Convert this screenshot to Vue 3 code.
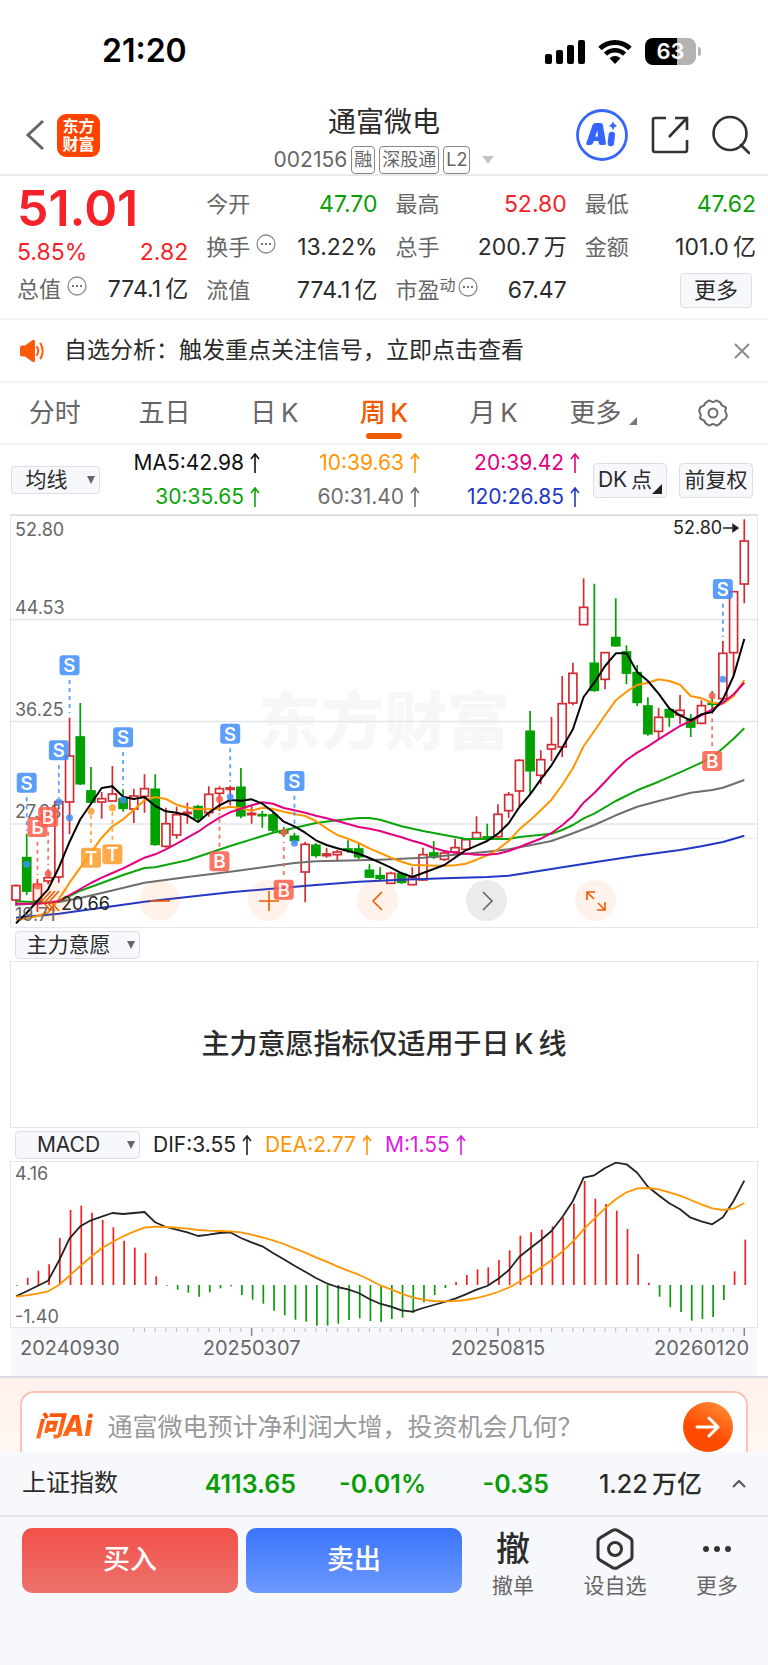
<script setup>
import { computed, ref } from 'vue'

const facts = [
  { label: '今开', value: '47.70', tone: 'down' },
  { label: '最高', value: '52.80', tone: 'up' },
  { label: '最低', value: '47.62', tone: 'down' },
  { label: '换手', value: '13.22%', hint: true },
  { label: '总手', value: '200.7\u2009万' },
  { label: '金额', value: '101.0\u2009亿' },
  { label: '流值', value: '774.1\u2009亿' },
  { label: '市盈', sup: '动', value: '67.47', hint: true }
]

const tabs = ['分时', '五日', '日\u2009K', '周\u2009K', '月\u2009K', '更多']
const activeTab = ref(tabs[3])

const averages = [
  { text: 'MA5:42.98', color: '#111111' },
  { text: '10:39.63', color: '#ff9500' },
  { text: '20:39.42', color: '#e3007f' },
  { text: '30:35.65', color: '#0aa50a' },
  { text: '60:31.40', color: '#6e6e6e' },
  { text: '120:26.85', color: '#2238c4' }
]

const macdValues = [
  { text: 'DIF:3.55', color: '#222222' },
  { text: 'DEA:2.77', color: '#ff9500' },
  { text: 'M:1.55', color: '#e01ae0' }
]

// weekly candles: high, body top, body bottom, low, 1 = rise / 0 = fall
const candles = [
  [1120, 1124, 1167, 1185, 1], [968, 1040, 1140, 1152, 0], [1103, 1120, 1170, 1203, 1],
  [1075, 1100, 1110, 1120, 1], [870, 872, 1098, 1115, 1], [620, 735, 873, 970, 1],
  [576, 678, 818, 822, 0], [768, 840, 873, 878, 0], [843, 863, 873, 923, 1],
  [765, 849, 870, 870, 1], [835, 863, 892, 902, 0], [833, 855, 894, 936, 1],
  [790, 833, 856, 905, 1], [790, 835, 1000, 1004, 0], [890, 938, 1006, 1010, 1],
  [887, 911, 972, 983, 1], [875, 904, 908, 938, 1], [881, 887, 921, 930, 0],
  [826, 850, 905, 917, 1], [826, 833, 847, 900, 1], [824, 831, 835, 883, 1],
  [771, 829, 914, 922, 0], [882, 907, 911, 938, 1], [900, 911, 914, 950, 0],
  [902, 912, 957, 963, 0], [948, 960, 966, 978, 0], [965, 976, 988, 996, 0],
  [992, 1000, 1083, 1174, 1], [996, 1003, 1033, 1040, 0], [1010, 1029, 1034, 1040, 1],
  [1017, 1023, 1031, 1047, 1], [988, 1014, 1018, 1025, 0], [997, 1014, 1037, 1044, 0],
  [1060, 1078, 1098, 1101, 0], [1069, 1094, 1102, 1107, 0], [1082, 1087, 1117, 1117, 1],
  [1082, 1089, 1114, 1119, 0], [1069, 1100, 1121, 1123, 1], [1010, 1031, 1107, 1110, 1],
  [990, 1026, 1038, 1044, 0], [1018, 1026, 1045, 1050, 1], [983, 1010, 1023, 1027, 1],
  [983, 986, 1015, 1020, 1], [916, 965, 982, 985, 1], [938, 978, 984, 986, 0],
  [880, 910, 977, 980, 1], [843, 851, 899, 921, 1], [745, 748, 840, 888, 1],
  [600, 661, 779, 850, 0], [718, 746, 793, 820, 1], [618, 701, 714, 750, 1],
  [495, 578, 708, 738, 1], [455, 487, 576, 583, 1], [202, 289, 341, 341, 1],
  [218, 457, 538, 542, 0], [424, 425, 505, 535, 1], [262, 380, 404, 407, 0],
  [403, 423, 486, 520, 0], [462, 485, 574, 585, 0], [559, 585, 668, 674, 0],
  [590, 619, 661, 685, 1], [590, 596, 618, 647, 0], [552, 598, 612, 640, 1],
  [609, 625, 648, 678, 0], [568, 584, 637, 640, 1], [540, 577, 580, 600, 0],
  [390, 427, 563, 568, 1], [242, 242, 425, 495, 1], [25, 90, 219, 277, 1]
]

const ma5 = [
  1237, 1206, 1170, 1135, 1070, 992, 925, 878, 831, 826, 857, 864, 858, 885, 901, 905, 913, 933,
  905, 883, 867, 869, 865, 878, 902, 932, 946, 965, 988, 1002, 1012, 1020, 1028, 1041, 1055, 1070,
  1087, 1098, 1086, 1074, 1062, 1040, 1018, 1004, 990, 968, 937, 888, 850, 805, 763, 710, 655, 558,
  515, 465, 427, 427, 483, 510, 548, 592, 613, 628, 610, 603, 565, 495, 384
]
const ma10 = [
  1226, 1222, 1216, 1204, 1165, 1115, 1070, 1025, 980, 946, 925, 897, 868, 858, 864, 881, 890, 895,
  895, 893, 887, 892, 899, 890, 894, 902, 909, 915, 930, 952, 972, 983, 996, 1012, 1026, 1040,
  1052, 1062, 1063, 1064, 1064, 1063, 1058, 1046, 1033, 1015, 990, 955, 928, 898, 866, 822, 772, 706,
  660, 613, 568, 542, 522, 515, 505, 510, 521, 555, 562, 575, 578, 556, 507
]
const ma20 = [
  1178, 1178, 1178, 1175, 1170, 1152, 1134, 1116, 1100, 1086, 1072, 1056, 1040, 1030, 1015, 998,
  980, 962, 940, 920, 904, 893, 883, 874, 878, 891, 898, 905, 914, 922, 930, 939, 948, 953, 960,
  970, 979, 989, 998, 1011, 1020, 1025, 1028, 1031, 1031, 1028, 1020, 1008, 995, 983, 966, 943, 915,
  875, 846, 812, 778, 747, 725, 706, 685, 665, 645, 630, 613, 595, 575, 550, 515
]
// slow averages: [week, level]
const ma30 = [
  [0, 1171], [3, 1175], [4, 1172], [6, 1139], [8, 1116], [10, 1092], [12, 1071], [13, 1069],
  [16, 1048], [20, 1005], [24, 965], [28, 936], [30, 928], [32, 921], [33, 921], [34, 926],
  [36, 946], [38, 960], [40, 972], [42, 984], [46, 984], [47, 978], [50, 968], [51, 957],
  [52, 942], [53, 922], [54, 908], [56, 870], [58, 838], [60, 812], [62, 784], [64, 755],
  [65, 738], [66, 712], [67, 683], [68, 652]
]
const ma60 = [
  [0, 1181], [4, 1173], [6, 1161], [8, 1146], [12, 1115], [16, 1098], [20, 1082], [26, 1056],
  [28, 1051], [34, 1046], [38, 1040], [42, 1028], [44, 1022], [46, 1015], [48, 1003], [50, 990],
  [52, 967], [54, 942], [56, 913], [58, 887], [60, 870], [63, 845], [65, 837], [66, 830], [68, 807]
]
const ma120 = [
  [0, 1220], [4, 1208], [8, 1190], [12, 1172], [16, 1158], [20, 1144], [28, 1122], [32, 1112],
  [36, 1106], [40, 1102], [44, 1098], [46, 1094], [50, 1074], [54, 1054], [58, 1034], [62, 1017],
  [64, 1006], [66, 993], [68, 974]
]

// trade signals: week, badge level, dot level, dashed line direction
const signals = [
  { kind: 'S', week: 1, y: 815, dot: 1060, dir: 1 },
  { kind: 'B', week: 2, y: 948, dot: 1125, dir: 1 },
  { kind: 'B', week: 3, y: 918, dot: 1088, dir: 1 },
  { kind: 'S', week: 4, y: 718, dot: 873, dir: 1 },
  { kind: 'S', week: 5, y: 463, dot: 920, dir: 1 },
  { kind: 'T', week: 7, y: 1040, dot: 901, dir: -1 },
  { kind: 'T', week: 9, y: 1030, dot: 890, dir: -1 },
  { kind: 'S', week: 10, y: 679, dot: 867, dir: 1 },
  { kind: 'B', week: 19, y: 1051, dot: 865, dir: -1 },
  { kind: 'S', week: 20, y: 668, dot: 858, dir: 1 },
  { kind: 'B', week: 25, y: 1136, dot: 964, dir: -1 },
  { kind: 'S', week: 26, y: 810, dot: 997, dir: 1 },
  { kind: 'B', week: 65, y: 750, dot: 554, dir: -1 },
  { kind: 'S', week: 66, y: 234, dot: 505, dir: 1 }
]
const signalColors = { S: '#3f8efc', B: '#ff5e4b', T: '#ff9c2a' }

const macdBars = [
  -2, 22, 43, 62, 141, 225, 238, 217, 195, 173, 133, 112, 96, 26, -2, -14, -23, -35, -22, -10, -4,
  -30, -44, -56, -77, -91, -104, -110, -122, -122, -116, -105, -100, -108, -111, -102, -98, -84, -52,
  -30, -9, 9, 30, 47, 53, 75, 104, 148, 158, 166, 176, 203, 244, 312, 259, 243, 223, 168, 93, 7,
  -35, -67, -81, -107, -102, -96, -45, 41, 136
]
const dif = [
  499, 484, 468, 452, 393, 325, 289, 271, 260, 249, 252, 249, 246, 277, 291, 299, 307, 318, 314,
  309, 307, 324, 337, 349, 369, 388, 407, 425, 444, 460, 471, 478, 489, 507, 521, 530, 541, 545,
  534, 525, 516, 506, 493, 479, 468, 447, 421, 380, 355, 330, 303, 262, 213, 143, 136, 114, 98,
  103, 128, 170, 196, 220, 238, 263, 274, 283, 262, 213, 152
]
const dea = [
  500, 496, 491, 484, 465, 437, 408, 380, 355, 336, 319, 305, 293, 290, 291, 293, 296, 300, 302,
  303, 304, 307, 314, 322, 331, 342, 355, 368, 382, 395, 409, 422, 434, 449, 466, 478, 491, 502,
  509, 513, 514, 513, 510, 504, 496, 486, 473, 455, 435, 413, 391, 365, 335, 298, 266, 235, 208,
  187, 175, 174, 178, 187, 197, 210, 223, 235, 240, 236, 219
]

const weekX = (i) => 5 + i * 10.71
const levelY = (v) => (v - 15) / 3
const macdY = (v) => (v - 96) / 3

function toPoints(list, scale) {
  return list
    .map((item, i) => (Array.isArray(item) ? item : [i, item]))
    .map(([i, v]) => `${weekX(i).toFixed(1)},${scale(v).toFixed(1)}`)
    .join(' ')
}

const priceLines = computed(() => [
  { color: '#2238c4', points: toPoints(ma120, levelY) },
  { color: '#6e6e6e', points: toPoints(ma60, levelY) },
  { color: '#0aa50a', points: toPoints(ma30, levelY) },
  { color: '#ff9500', points: toPoints(ma10, levelY) },
  { color: '#e3007f', points: toPoints(ma20, levelY) },
  { color: '#000000', points: toPoints(ma5, levelY) }
])

const priceLabels = [
  { text: '52.80', y: 20 },
  { text: '44.53', y: 98 },
  { text: '36.25', y: 200 },
  { text: '27.98', y: 302 },
  { text: '19.71', y: 405 }
]

const dates = [
  { text: '20240930', x: 9, anchor: 'start' },
  { text: '20250307', x: weekX(22), anchor: 'middle' },
  { text: '20250815', x: weekX(45), anchor: 'middle' },
  { text: '20260120', x: 738, anchor: 'end' }
]

const ticks = Array.from({ length: 58 }, (_, i) => i + 11)
const isMajor = (i) => i === 22 || i === 45 || i === 68
</script>

<template>
  <div class="page">
    <div class="status">
      <span class="clock">21:20</span>
      <div class="status-icons">
        <svg width="40" height="24" viewBox="0 0 40 24">
          <rect x="0" y="14" width="7" height="10" rx="2" />
          <rect x="11" y="10" width="7" height="14" rx="2" />
          <rect x="22" y="5" width="7" height="19" rx="2" />
          <rect x="33" y="0" width="7" height="24" rx="2" />
        </svg>
        <svg width="34" height="25" viewBox="0 0 34 25">
          <path d="M2 9.500a21.500 21.500 0 0 1 30 0" fill="none" stroke="#000" stroke-width="5" />
          <path d="M7.500 15.200a13.500 13.500 0 0 1 19 0" fill="none" stroke="#000" stroke-width="4.600" />
          <path d="M17 25l-5.500-5.800a8 8 0 0 1 11 0z" />
        </svg>
        <div class="battery"><span>63</span></div>
      </div>
    </div>

    <header class="header">
      <div class="header-side header-back">
        <button class="icon-btn" aria-label="返回">
          <svg width="20" height="32" viewBox="0 0 20 32">
            <path d="M18 2L3 16l15 14" fill="none" stroke="#666" stroke-width="3" />
          </svg>
        </button>
        <div class="brand"><span>东方</span><span>财富</span></div>
      </div>
      <div class="title">
        <h1>通富微电</h1>
        <div class="code">
          <span class="code-num">002156</span>
          <span class="badge">融</span>
          <span class="badge">深股通</span>
          <span class="badge">L2</span>
          <svg class="code-caret" width="12" height="8" viewBox="0 0 12 8">
            <path d="M0 0h12L6 8z" fill="#c4c4c4" />
          </svg>
        </div>
      </div>
      <div class="header-side header-actions">
        <button class="icon-btn" aria-label="AI">
          <svg width="52" height="52" viewBox="0 0 52 52">
            <circle cx="26" cy="26" r="24.500" fill="#fff" stroke="#3665fb" stroke-width="2.800" />
            <path d="M10.500 33.500L16.500 16q.8-2 3-2h5q2 0 2.400 2l3 17.500q.3 2.500-2 2.500h-3q-2 0-2.200-2l-.3-2h-4.600l-.8 2.200q-.6 1.800-2.600 1.800h-2.500q-2.200 0-1.400-2.500zM19.200 27.500h2.800l-.6-6z" fill="#3665fb" fill-rule="evenodd" />
            <path d="M35.800 26l-.9 8" stroke="#3665fb" stroke-width="6.500" stroke-linecap="round" />
            <path d="M37 12.500q1 3.500 4 4.300q-3 .8-4 4.200q-1-3.400-4-4.200q3-.8 4-4.300z" fill="#3665fb" />
          </svg>
        </button>
        <button class="icon-btn" aria-label="分享">
          <svg width="38" height="38" viewBox="0 0 38 38" fill="none" stroke="#333" stroke-width="2.600">
            <path d="M15 2H4a2 2 0 0 0-2 2v30a2 2 0 0 0 2 2h30a2 2 0 0 0 2-2V24" />
            <path d="M24 2h12v12M35.500 2.500L18 21" />
          </svg>
        </button>
        <button class="icon-btn" aria-label="搜索">
          <svg width="38" height="40" viewBox="1 0 38 40" fill="none" stroke="#333" stroke-width="2.600">
            <circle cx="19" cy="18.500" r="16.500" />
            <path d="M30 30l8 8" stroke-linecap="round" />
          </svg>
        </button>
      </div>
    </header>

    <section class="quote">
      <div class="quote-main">
        <strong class="price">51.01</strong>
        <div class="fact up"><span>5.85%</span><span>2.82</span></div>
        <div class="fact">
          <span class="fact-label">总值
            <svg class="hint" width="20" height="20" viewBox="0 0 20 20">
              <circle cx="10" cy="10" r="9" fill="none" stroke="#8a8a8a" stroke-width="1.300" />
              <path d="M5 10h2M9 10h2M13 10h2" stroke="#777" stroke-width="2" />
            </svg>
          </span>
          <span>774.1&#8201;亿</span>
        </div>
      </div>
      <div class="facts">
        <div v-for="fact in facts" :key="fact.label" class="fact">
          <span class="fact-label">{{ fact.label }}<sup v-if="fact.sup">{{ fact.sup }}</sup>
            <svg v-if="fact.hint" class="hint" width="20" height="20" viewBox="0 0 20 20">
              <circle cx="10" cy="10" r="9" fill="none" stroke="#8a8a8a" stroke-width="1.300" />
              <path d="M5 10h2M9 10h2M13 10h2" stroke="#777" stroke-width="2" />
            </svg>
          </span>
          <span :class="fact.tone">{{ fact.value }}</span>
        </div>
        <div class="fact fact-end"><button class="more-btn">更多</button></div>
      </div>
    </section>

    <section class="notice">
      <svg width="25" height="24" viewBox="0 0 25 24">
        <path d="M0 8.500a2 2 0 0 1 2-2h3L12 1.500q3-2 3 1.500v18q0 3.500-3 1.500L5 17.500H2a2 2 0 0 1-2-2z" fill="#ff5a0a" />
        <path d="M17 8q2.500 4 0 8M20.500 4.500q4.500 7.500 0 15" fill="none" stroke="#ff5a0a" stroke-width="2" stroke-linecap="round" />
      </svg>
      <a href="#">自选分析：触发重点关注信号，立即点击查看</a>
      <button class="icon-btn" aria-label="关闭">
        <svg width="16" height="16" viewBox="0 0 16 16">
          <path d="M1 1l14 14M15 1L1 15" stroke="#8c8c8c" stroke-width="2" />
        </svg>
      </button>
    </section>

    <nav class="tabs">
      <button
        v-for="tab in tabs"
        :key="tab"
        :class="['tab', { active: tab === activeTab }]"
        @click="activeTab = tab"
      >
        {{ tab }}
        <svg v-if="tab === '更多'" class="tab-corner" width="8" height="8" viewBox="0 0 8 8">
          <path d="M8 0v8H0z" fill="#777" />
        </svg>
      </button>
      <button class="tab" aria-label="设置">
        <svg width="30" height="28" viewBox="0 0 30 28" fill="none" stroke="#6b6b6b" stroke-width="2">
          <path d="M10 2.200q1.500-1.400 3 0q2 1.600 4 0q1.500-1.400 3 0l2.600 1.600q.6 2.800 3 3.400q2.400 .6 2.400 2.200q-1.500 2.300 0 4.600q1.500 2.300 0 4.600q0 1.600-2.400 2.200q-2.400 .6-3 3.400L20 25.800q-1.500 1.400-3 0q-2-1.600-4 0q-1.500 1.400-3 0l-2.600-1.600q-.6-2.800-3-3.400Q2 20.200 2 18.600q1.500-2.300 0-4.600q-1.500-2.300 0-4.600q0-1.600 2.400-2.200q2.400-.6 3-3.400z" />
          <circle cx="15" cy="14" r="4.500" />
        </svg>
      </button>
    </nav>

    <section class="indicators">
      <span class="select select-small">
        <select aria-label="指标">
          <option>均线</option>
        </select>
      </span>
      <div class="averages">
        <span v-for="item in averages" :key="item.text" :style="{ color: item.color }">
          {{ item.text }}
          <svg class="arrow" width="10" height="20" viewBox="0 0 10 20">
            <path d="M5 20V1M1 6l4-5 4 5" />
          </svg>
        </span>
      </div>
      <button class="chip chip-corner">DK&#8201;点</button>
      <button class="chip">前复权</button>
    </section>

    <section class="panel price-panel">
      <svg class="chart" viewBox="0 0 746 411">
        <text class="watermark" x="373" y="228" text-anchor="middle">东方财富</text>
        <path d="M0 103.500H746M0 205.500H746M0 308H746" stroke="#e3e6ee" stroke-width="1.500" />
        <path d="M490 322.500H746" stroke="#ececec" stroke-width="1.500" />
        <g v-for="(c, i) in candles" :key="i" :class="c[4] ? 'rise' : 'fall'">
          <path :d="`M${weekX(i)} ${levelY(c[0])}V${levelY(c[1])}M${weekX(i)} ${levelY(c[2])}V${levelY(c[3])}`" />
          <rect :x="weekX(i) - 4" :y="levelY(c[1])" width="8" :height="levelY(c[2]) - levelY(c[1])" />
        </g>
        <polyline
          v-for="line in priceLines"
          :key="line.color"
          class="line"
          :points="line.points"
          :stroke="line.color"
        />
        <g class="axis-text">
          <text v-for="label in priceLabels" :key="label.text" x="4" :y="label.y">{{ label.text }}</text>
        </g>
        <text class="mark-text" x="50" y="394">20.66</text>
        <text class="mark-text" x="662" y="18">52.80</text>
        <path d="M712 12h14M722 8.500l5 3.500-5 3.500z" fill="#222" stroke="#222" stroke-width="1.500" />
        <g v-for="s in signals" :key="s.week" opacity=".85">
          <path
            :d="`M${weekX(s.week)} ${levelY(s.y + s.dir * 44)}V${levelY(s.y + s.dir * 144)}`"
            :stroke="signalColors[s.kind]"
            stroke-width="1.800"
            stroke-dasharray="4 4"
          />
          <circle :cx="weekX(s.week)" :cy="levelY(s.dot)" r="3.500" :fill="signalColors[s.kind]" />
          <rect :x="weekX(s.week) - 10" :y="levelY(s.y) - 10" width="20" height="20" rx="3" :fill="signalColors[s.kind]" />
          <text class="signal" :x="weekX(s.week)" :y="levelY(s.y) + 7" text-anchor="middle">{{ s.kind }}</text>
        </g>
      </svg>
      <div class="tools">
        <button class="tool" aria-label="最早">
          <svg width="20" height="20" viewBox="0 0 20 20"><path d="M10 0L1 10l9 10M14 0L5 10l9 10M18 0L9 10l9 10" /></svg>
        </button>
        <button class="tool" aria-label="缩小">
          <svg width="20" height="20" viewBox="0 0 20 20"><path d="M0 10h20" /></svg>
        </button>
        <button class="tool" aria-label="放大">
          <svg width="20" height="20" viewBox="0 0 20 20"><path d="M0 10h20M10 0v20" /></svg>
        </button>
        <button class="tool" aria-label="向前">
          <svg width="20" height="20" viewBox="0 0 20 20"><path d="M14 1L5 10l9 9" /></svg>
        </button>
        <button class="tool tool-grey" aria-label="向后">
          <svg width="20" height="20" viewBox="0 0 20 20"><path d="M6 1l9 9-9 9" /></svg>
        </button>
        <button class="tool" aria-label="全屏">
          <svg width="20" height="20" viewBox="0 0 20 20"><path d="M1 9V1h8M1 1l7 7M19 11v8h-8M19 19l-7-7" /></svg>
        </button>
      </div>
    </section>

    <div class="panel-head">
      <span class="select">
        <select aria-label="副图指标一">
          <option>主力意愿</option>
        </select>
      </span>
    </div>
    <section class="panel empty-panel">主力意愿指标仅适用于日&#8201;K&#8201;线</section>

    <div class="panel-head">
      <span class="select">
        <select aria-label="副图指标二">
          <option>MACD</option>
        </select>
      </span>
      <span v-for="item in macdValues" :key="item.text" class="macd-value" :style="{ color: item.color }">
        {{ item.text }}
        <svg class="arrow" width="10" height="20" viewBox="0 0 10 20">
          <path d="M5 20V1M1 6l4-5 4 5" />
        </svg>
      </span>
    </div>
    <section class="panel macd-panel">
      <svg class="chart" viewBox="0 0 746 165">
        <g class="axis-text">
          <text x="4" y="18">4.16</text>
          <text x="4" y="161">-1.40</text>
        </g>
        <path
          v-for="(v, i) in macdBars"
          :key="i"
          :d="`M${weekX(i) + 1} 123V${123 - v / 3}`"
          :stroke="v > 0 ? '#f51d1d' : '#0a9a0a'"
          stroke-width="1.700"
        />
        <polyline class="line thin" :points="toPoints(dif, macdY)" stroke="#222" />
        <polyline class="line thin" :points="toPoints(dea, macdY)" stroke="#ff9500" />
      </svg>
    </section>
    <div class="axis">
      <svg class="chart" viewBox="0 0 746 49">
        <path
          v-for="i in ticks"
          :key="i"
          :d="`M${weekX(i)} 0V${isMajor(i) ? 9 : 5}`"
          :stroke="isMajor(i) ? '#888' : '#bbb'"
          :stroke-width="isMajor(i) ? 1.5 : 1"
        />
        <g class="date-text">
          <text v-for="d in dates" :key="d.text" :x="d.x" y="28" :text-anchor="d.anchor">{{ d.text }}</text>
        </g>
      </svg>
    </div>

    <section class="ask">
      <div class="ask-box">
        <label class="ask-logo" for="ask">问Ai</label>
        <input id="ask" type="text" placeholder="通富微电预计净利润大增，投资机会几何？">
        <button class="ask-go" aria-label="发送">
          <svg width="26" height="22" viewBox="0 0 26 22">
            <path d="M2 11h21M14 2l9 9-9 9" fill="none" stroke="#fff" stroke-width="3" stroke-linecap="round" stroke-linejoin="round" />
          </svg>
        </button>
      </div>
    </section>

    <section class="index">
      <span>上证指数</span>
      <b class="down">4113.65</b>
      <b class="down">-0.01%</b>
      <b class="down">-0.35</b>
      <b class="index-amount">1.22&#8201;万亿</b>
      <button class="icon-btn" aria-label="展开">
        <svg width="14" height="9" viewBox="0 0 14 9">
          <path d="M1 8l6-6 6 6" fill="none" stroke="#555" stroke-width="2" />
        </svg>
      </button>
    </section>

    <footer class="footer">
      <button class="trade buy">买入</button>
      <button class="trade sell">卖出</button>
      <div class="links">
        <button class="link"><span class="link-icon">撤</span>撤单</button>
        <button class="link">
          <span class="link-icon">
            <svg width="38" height="42" viewBox="0 0 38 42" fill="none" stroke="#333" stroke-width="3">
              <path d="M16.500 2.400q2.500-1.400 5 0l12 7.200q2.500 1.400 2.500 4v14.800q0 2.600-2.500 4l-12 7.200q-2.500 1.400-5 0l-12-7.200q-2.500-1.400-2.500-4V13.600q0-2.600 2.500-4z" />
              <circle cx="19" cy="21" r="6.500" />
            </svg>
          </span>设自选
        </button>
        <button class="link">
          <span class="link-icon">
            <svg width="30" height="8" viewBox="0 0 30 8" fill="#333">
              <circle cx="4" cy="4" r="3" />
              <circle cx="15" cy="4" r="3" />
              <circle cx="26" cy="4" r="3" />
            </svg>
          </span>更多
        </button>
      </div>
    </footer>
  </div>
</template>

<style>
body {
  margin: 0;
  background: #f7f8fb;
}

* {
  box-sizing: border-box;
}
</style>

<style scoped>
.page {
  background: #ffffff;
  color: #2b2b2b;
  font-family: Inter, "Noto Sans CJK SC", sans-serif;
  font-size: 22px;
  line-height: 1.2;
}

button {
  border: none;
  padding: 0;
  background: none;
  color: inherit;
  font: inherit;
  white-space: nowrap;
}

.icon-btn {
  display: flex;
}

.chart {
  display: block;
  width: 100%;
  height: auto;
}

.up {
  color: #f5222a;
}

.down {
  color: #0a9d0a;
}

.status {
  display: flex;
  align-items: center;
  justify-content: space-between;
  height: 103px;
  padding: 0 66px 0 102px;
}

.clock {
  color: #000000;
  font-size: 32px;
  font-weight: 600;
}

.status-icons {
  display: flex;
  align-items: center;
  gap: 13px;
}

.battery {
  position: relative;
  width: 51px;
  height: 27px;
  margin-right: 6px;
  border-radius: 8px;
  background: linear-gradient(90deg, #000000 63%, #b3b3b3 63%);
  color: #ffffff;
  font-size: 22px;
  font-weight: 600;
  line-height: 27px;
  text-align: center;
}

.battery::after {
  content: "";
  position: absolute;
  top: 9px;
  right: -5px;
  width: 3px;
  height: 9px;
  border-radius: 0 3px 3px 0;
  background: #b3b3b3;
}

.header {
  display: grid;
  grid-template-columns: 1fr auto 1fr;
  align-items: center;
  height: 73px;
  padding: 0 18px;
  border-bottom: 2px solid #e9e9e9;
}

.header-side {
  display: flex;
  align-items: center;
  gap: 12px;
  padding-bottom: 7px;
}

.header-back {
  padding-left: 7px;
}

.header-actions {
  justify-content: flex-end;
  gap: 23px;
}

.brand {
  display: flex;
  flex-direction: column;
  align-items: center;
  justify-content: center;
  width: 43px;
  height: 43px;
  border-radius: 9px;
  background: #ff4400;
  color: #ffffff;
  font-size: 16px;
  font-weight: 700;
  line-height: 18px;
}

.title {
  display: flex;
  flex-direction: column;
  align-items: center;
  gap: 6px;
}

.title h1 {
  margin: 0;
  font-size: 28px;
  font-weight: 400;
  line-height: 36px;
}

.code {
  display: flex;
  align-items: center;
  gap: 4px;
  color: #666666;
}

.code-num {
  font-size: 21px;
  line-height: 28px;
}

.badge {
  padding: 0 2px;
  border: 1px solid #888888;
  border-radius: 4px;
  font-size: 18px;
  line-height: 26px;
}

.code-caret {
  margin-left: 8px;
}

.quote {
  display: grid;
  grid-template-columns: repeat(4, 1fr);
  gap: 18px;
  padding: 7px 12px 6px 17px;
  border-bottom: 2px solid #f3f3f5;
  font-size: 23px;
}

.quote-main {
  display: flex;
  flex-direction: column;
}

.price {
  color: #f5222a;
  font-size: 50px;
  font-weight: 600;
  line-height: 51px;
}

.facts {
  display: grid;
  grid-column: span 3;
  grid-template-columns: repeat(3, 1fr);
  column-gap: 18px;
}

.fact {
  display: flex;
  align-items: center;
  justify-content: space-between;
  height: 43px;
  white-space: nowrap;
}

.quote-main .fact {
  height: 37px;
}

.fact-end {
  justify-content: flex-end;
}

.fact-label {
  display: flex;
  align-items: center;
  color: #666666;
  font-size: 22px;
}

.fact-label sup {
  padding-bottom: 12px;
  font-size: 16px;
  line-height: 16px;
}

.hint {
  margin: 0 0 8px 6px;
}

sup + .hint {
  margin-left: 2px;
}

.more-btn {
  width: 72px;
  height: 35px;
  margin-right: 4px;
  border: 1px solid #dcdfe6;
  border-radius: 4px;
  background: #f7f8fb;
  font-size: 22px;
}

.notice {
  display: flex;
  align-items: center;
  gap: 19px;
  height: 63px;
  padding: 0 18px 0 20px;
  border-bottom: 2px solid #f3f3f5;
}

.notice a {
  flex: 1;
  color: #2b2b2b;
  font-size: 23px;
  text-decoration: none;
}

.tabs {
  display: grid;
  grid-template-columns: repeat(7, 1fr);
  height: 62px;
  border-bottom: 2px solid #f3f3f5;
}

.tab {
  position: relative;
  display: flex;
  align-items: center;
  justify-content: center;
  color: #666666;
  font-size: 26px;
}

.tab.active {
  color: #f05a00;
  font-weight: 500;
}

.tab.active::after {
  content: "";
  position: absolute;
  bottom: 4px;
  width: 36px;
  height: 6px;
  border-radius: 3px;
  background: #f05a00;
}

.tab-corner {
  align-self: flex-end;
  margin: 0 0 18px 8px;
}

.indicators {
  display: flex;
  align-items: center;
  height: 70px;
  padding: 0 15px 0 11px;
}

.select {
  position: relative;
  width: 125px;
}

.select-small {
  width: 89px;
}

.select::after {
  content: "";
  position: absolute;
  top: 10px;
  right: 5px;
  border: 4px solid transparent;
  border-top: 8px solid #666666;
  border-bottom: none;
  pointer-events: none;
}

.select select {
  display: block;
  width: 100%;
  height: 28px;
  padding: 0 18px 0 0;
  border: 1px solid #dcdfe6;
  border-radius: 4px;
  appearance: none;
  background: #f7f8fb;
  color: #2b2b2b;
  font: inherit;
  font-size: 21px;
  line-height: 26px;
  text-align: center;
  text-align-last: center;
}

.averages {
  display: grid;
  flex: 1;
  grid-template-columns: repeat(3, 1fr);
  row-gap: 6px;
  margin-right: 13px;
  font-size: 21px;
  line-height: 28px;
  text-align: right;
  white-space: nowrap;
}

.arrow {
  fill: none;
  stroke: currentColor;
  stroke-width: 1.6;
  vertical-align: -3px;
}

.chip {
  position: relative;
  width: 74px;
  height: 35px;
  border: 1px solid #dcdfe6;
  border-radius: 4px;
  background: #f7f8fb;
  font-size: 21px;
}

.chip + .chip {
  margin-left: 12px;
}

.chip-corner {
  padding-right: 10px;
}

.chip-corner::after {
  content: "";
  position: absolute;
  right: 4px;
  bottom: 3px;
  border: 5px solid #222222;
  border-top-color: transparent;
  border-left-color: transparent;
}

.panel {
  position: relative;
  margin: 0 11px;
  outline: 1px solid #e3e6ee;
}

.price-panel {
  border-top: 1px solid #d8dae0;
}

.line {
  fill: none;
  stroke-width: 2;
  stroke-linejoin: round;
}

.thin {
  stroke-width: 1.8;
}

.rise {
  fill: none;
  stroke: #d42c34;
  stroke-width: 1.7;
}

.fall {
  fill: #00a000;
  stroke: #00a000;
  stroke-width: 1.7;
}

.watermark {
  fill: #f7f7f7;
  font-size: 63px;
  font-weight: 900;
}

.axis-text {
  fill: #666666;
  font-size: 18px;
}

.date-text {
  fill: #666666;
  font-size: 20px;
}

.mark-text {
  fill: #222222;
  font-size: 18px;
}

.signal {
  fill: #ffffff;
  font-size: 19px;
  font-weight: 600;
}

.tools {
  position: absolute;
  bottom: 6px;
  left: 19px;
  display: flex;
  gap: 68px;
}

.tool {
  display: flex;
  align-items: center;
  justify-content: center;
  width: 41px;
  height: 41px;
  border-radius: 50%;
  background: rgba(255, 90, 0, 0.08);
}

.tool svg {
  fill: none;
  stroke: #f05a00;
  stroke-width: 1.6;
}

.tool-grey {
  background: #ebebeb;
}

.tool-grey svg {
  stroke: #666666;
}

.panel-head {
  display: flex;
  align-items: center;
  height: 35px;
  padding: 0 15px;
}

.empty-panel {
  display: flex;
  align-items: center;
  justify-content: center;
  height: 165px;
  font-size: 28px;
  font-weight: 500;
}

.macd-value {
  margin-left: 13px;
  font-size: 21px;
  white-space: nowrap;
}

.axis {
  margin: 0 11px;
  background: #f7f8fb;
}

.ask {
  height: 76px;
  padding: 13px 20px 0;
  overflow: hidden;
  border-top: 2px solid #dcdde4;
  background: linear-gradient(#fff1ec, #fff8f2);
}

.ask-box {
  display: flex;
  align-items: center;
  gap: 15px;
  height: 72px;
  padding: 0 13px;
  border: 2px solid #ffc3b5;
  border-radius: 14px;
  background: #ffffff;
}

.ask-logo {
  background: linear-gradient(180deg, #ff4b00, #ff7a2a);
  background-clip: text;
  color: transparent;
  font-size: 28px;
  font-style: italic;
  font-weight: 800;
}

.ask-box input {
  flex: 1;
  min-width: 0;
  padding: 0;
  border: none;
  outline: none;
  font: inherit;
  font-size: 25px;
}

.ask-box input::placeholder {
  color: #999999;
}

.ask-go {
  display: flex;
  align-items: center;
  justify-content: center;
  width: 50px;
  height: 50px;
  border-radius: 50%;
  background: linear-gradient(30deg, #ff4b00 40%, #ff9440);
}

.index {
  display: grid;
  grid-template-columns: 144fr 130fr 130fr 123fr 153fr 44fr;
  align-items: center;
  height: 65px;
  padding: 0 22px;
  border-bottom: 2px solid #e6e7ea;
  background: #f7f8fb;
  font-size: 24px;
  white-space: nowrap;
}

.index b {
  font-size: 25px;
  font-weight: 600;
  text-align: right;
}

.index .index-amount {
  font-weight: 500;
}

.index .icon-btn {
  justify-content: flex-end;
}

.footer {
  display: flex;
  align-items: flex-start;
  padding: 11px 0 72px 22px;
  background: #f7f8fb;
}

.trade {
  width: 216px;
  height: 65px;
  border-radius: 10px;
  color: #ffffff;
  font-size: 27px;
  font-weight: 500;
}

.trade + .trade {
  margin-left: 8px;
}

.buy {
  background: linear-gradient(#f2504a, #ec736c);
}

.sell {
  background: linear-gradient(#3a74fa, #6c99ff);
}

.links {
  display: grid;
  flex: 1;
  grid-template-columns: repeat(3, 1fr);
}

.link {
  display: flex;
  flex-direction: column;
  align-items: center;
  color: #666666;
  font-size: 21px;
  line-height: 32px;
}

.link-icon {
  display: flex;
  align-items: center;
  height: 42px;
  color: #2b2b2b;
  font-size: 34px;
  font-weight: 500;
}
</style>
